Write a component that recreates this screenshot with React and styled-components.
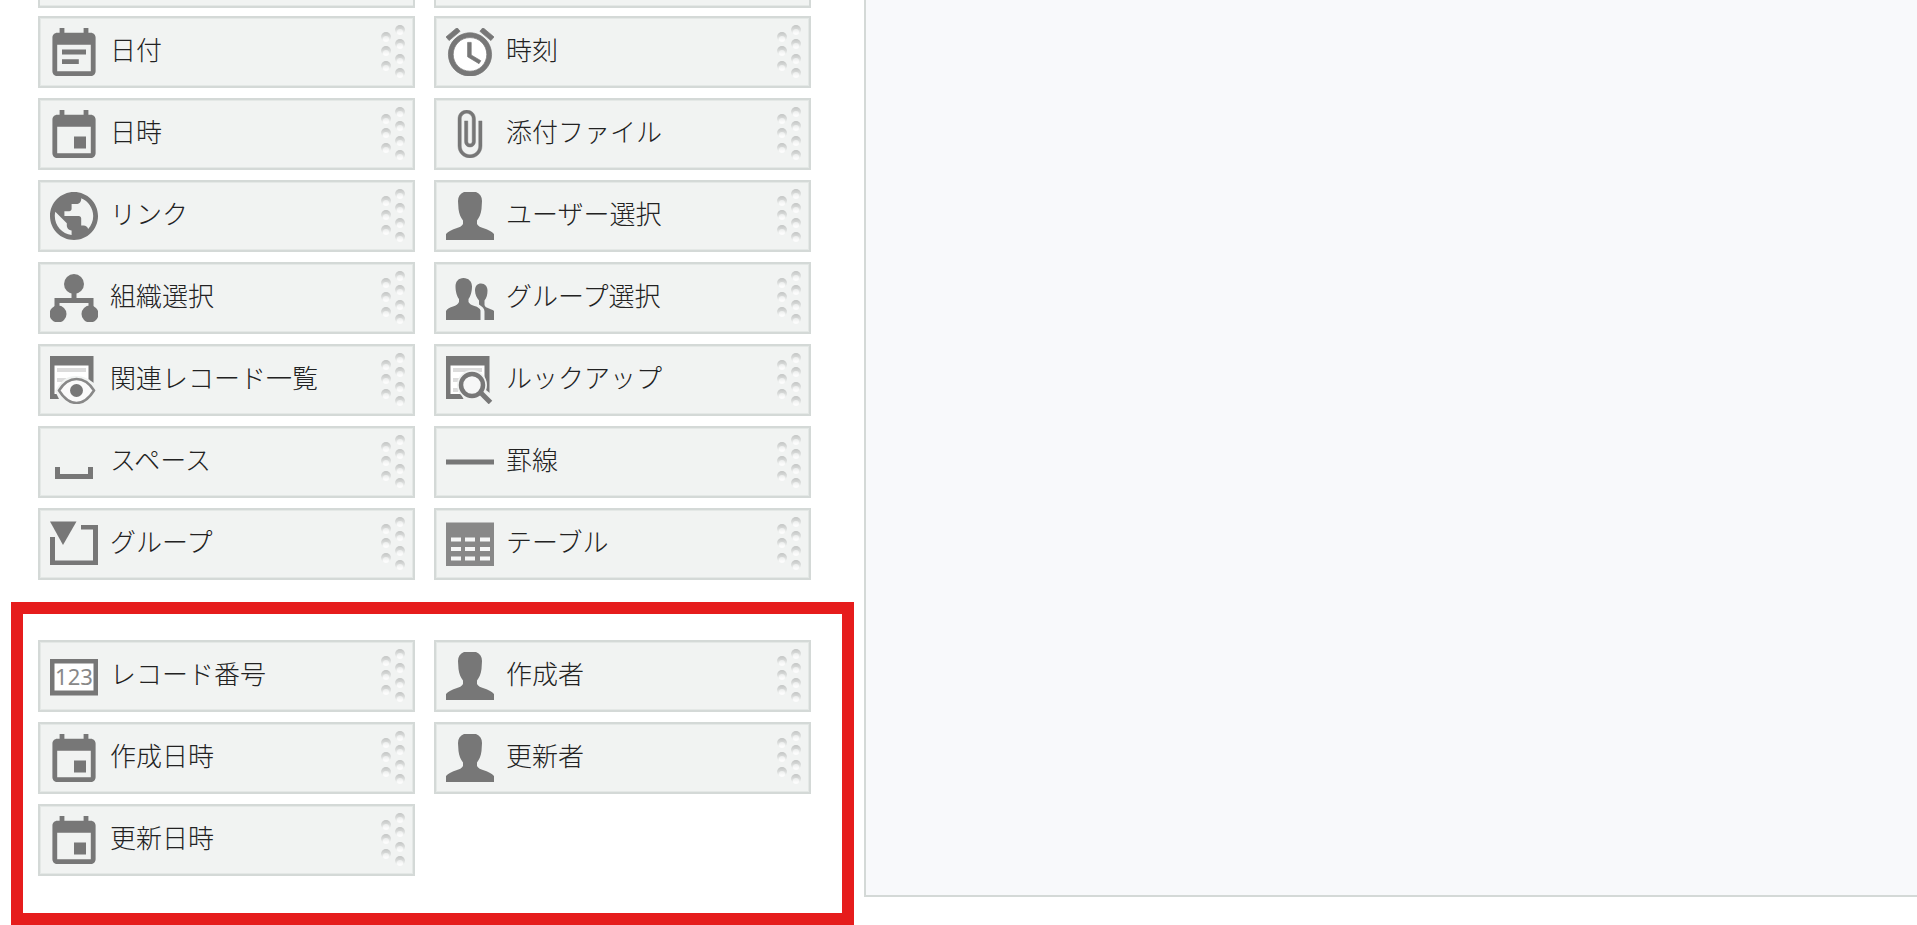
import React from "react";
import styled, { createGlobalStyle } from "styled-components";

const DateIcon = () => (
  <StIcon viewBox="2 1 20 20">
    <path d="M19 3h-1V1h-2v2H8V1H6v2H5c-1.11 0-1.99.9-1.99 2L3 19c0 1.1.89 2 2 2h14c1.1 0 2-.9 2-2V5c0-1.1-.9-2-2-2zm0 16H5V8h14v11z" />
    <path d="M7 10h10v2H7zM7 14h7v2H7z" />
  </StIcon>
);

const DateTimeIcon = () => (
  <StIcon viewBox="2 1 20 20">
    <path d="M17 12h-5v5h5v-5zM16 1v2H8V1H6v2H5c-1.11 0-1.99.9-1.99 2L3 19c0 1.1.89 2 2 2h14c1.1 0 2-.9 2-2V5c0-1.1-.9-2-2-2h-1V1h-2zm3 18H5V8h14v11z" />
  </StIcon>
);

const TimeIcon = () => (
  <StIcon viewBox="2 2 20 20">
    <circle cx="12" cy="13" r="8" fill="#fff" />
    <path
      d="M22 5.72l-4.6-3.86-1.29 1.53 4.6 3.86L22 5.72zM7.88 3.39L6.6 1.86 2 5.71l1.29 1.53 4.59-3.85zM12.5 8H11v6l4.75 2.85.75-1.23-4-2.37V8zM12 4c-4.97 0-9 4.03-9 9s4.02 9 9 9c4.97 0 9-4.03 9-9s-4.03-9-9-9zm0 16c-3.87 0-7-3.13-7-7s3.13-7 7-7 7 3.13 7 7-3.13 7-7 7z"
      stroke="#777"
      strokeWidth="0.3"
    />
  </StIcon>
);

const FileIcon = () => (
  <StIcon viewBox="1.5 1 22 22">
    <path
      d="M16.5 6v11.5c0 2.21-1.79 4-4 4s-4-1.79-4-4V5c0-1.38 1.12-2.5 2.5-2.5s2.5 1.12 2.5 2.5v10.5c0 .55-.45 1-1 1s-1-.45-1-1V6H10v9.5c0 1.38 1.12 2.5 2.5 2.5s2.5-1.12 2.5-2.5V5c0-2.21-1.79-4-4-4S7 2.79 7 5v12.5c0 3.04 2.46 5.5 5.5 5.5s5.5-2.46 5.5-5.5V6h-1.5z"
      stroke="#777"
      strokeWidth="0.2"
    />
  </StIcon>
);

const LinkIcon = () => (
  <StIcon viewBox="2 2 20 20">
    <path d="M12 2C6.48 2 2 6.48 2 12s4.48 10 10 10 10-4.48 10-10S17.52 2 12 2zm-1 17.93c-3.95-.49-7-3.85-7-7.93 0-.62.08-1.21.21-1.79L9 15v1c0 1.1.9 2 2 2v1.93zm6.9-2.54c-.26-.81-1-1.39-1.9-1.39h-1v-3c0-.55-.45-1-1-1H8v-2h2c.55 0 1-.45 1-1V7h2c1.1 0 2-.9 2-2v-.41c2.93 1.19 5 4.06 5 7.41 0 2.08-.8 3.97-2.1 5.39z" />
  </StIcon>
);

const UserIcon = () => (
  <StIcon viewBox="0 0 48 48">
    <path d="M18 0h12c4 1.5 6 4.500 6 9l-.5 8c-.5 5-2.500 9-4.500 11.500V32c1 2 3 3 6 4 5 1.500 9 3.500 11 6v6H0v-6c2-2.500 6-4.500 11-6 3-1 5-2 6-4v-3.500c-2-2.500-4-6.500-4.500-11.500L12 9c0-4.500 2-7.500 6-9z" />
  </StIcon>
);

const OrgIcon = () => (
  <StIcon viewBox="0 0 48 48">
    <circle cx="24" cy="10" r="10" />
    <circle cx="8" cy="40" r="8.5" />
    <circle cx="40" cy="40" r="8.5" />
    <path d="M21.5 18h5v6h17v10h-5v-5h-29v5h-5V24h17z" />
  </StIcon>
);

const GroupUserIcon = () => (
  <StIcon viewBox="0 0 48 48">
    <path d="M17.5 4c5 0 8.500 3.500 8.500 8.500s-1.500 10-3.500 12.500v3c1 2 3 3 6 4 3.500 1 5.500 2.500 6 4.500V46H0v-9c1-2.500 4-3.500 7-4.500s5-2 6-4.500v-3c-2-2.500-3.500-7.500-3.500-12.500S12.500 4 17.500 4z" />
    <path d="M35 9.500c4 0 6.500 3 6.500 7 0 4.500-1 7.500-3 10V31c.5 2 2 2.500 4.500 3.500s4 1.500 5 2.500v9h-9.500v-8.500c0-3-2-4.500-5.500-7v-4c-2-2.500-4-5.500-4-10s2.500-7 6-7z" />
  </StIcon>
);

const RelatedIcon = () => (
  <StIcon viewBox="0 0 48 48">
    <path d="M0 0h43.5v43H0z" />
    <path d="M4.5 9.5h34V38h-34z" fill="#fff" />
    <path d="M7 12h29v4H7zM7 22h9v4H7z" fill="#dcdcdc" />
    <path d="M5 35C12 23 18 20 26 20c8 0 13 3 19 8v17H10z" fill="#f1f3f2" />
    <path
      d="M9 34.5C14 26.5 20 23 26.5 23S39 26.5 44 34.5C39 42.5 33 47 26.5 47S14 42.5 9 34.5z"
      fill="#fafafa"
      stroke="#888"
      strokeWidth="2.5"
    />
    <circle cx="26.5" cy="34.5" r="6.5" />
  </StIcon>
);

const LookupIcon = () => (
  <StIcon viewBox="0 0 48 48">
    <path d="M0 0h43.5v43H0z" />
    <path d="M4.5 9.5h34V38h-34z" fill="#fff" />
    <path d="M7 12h29v4H7zM7 22h7v4H7zM7 32h5v4H7z" fill="#dcdcdc" />
    <path d="M40 34l5 4v6H18l-2-4z" fill="#f1f3f2" />
    <circle cx="26" cy="29" r="12" fill="#fff" stroke="#f1f3f2" strokeWidth="6" />
    <circle cx="26" cy="29" r="11" fill="#f6f7f7" stroke="#777" strokeWidth="4.5" />
    <path d="M34 36l10.5 10.5" fill="none" stroke="#777" strokeWidth="5" />
  </StIcon>
);

const SpaceIcon = () => (
  <StIcon viewBox="0 0 48 48">
    <path d="M5 29h5v7h28v-7h5v12H5z" />
  </StIcon>
);

const LineIcon = () => (
  <StIcon viewBox="0 0 48 48">
    <path d="M0 21.5h48v5H0z" />
  </StIcon>
);

const GroupIcon = () => (
  <StIcon viewBox="0 0 48 48">
    <path d="M0 1.5h26.5L13 25z" />
    <path d="M31 5h17v40H0V17h5v23.5h38V9.5H31z" />
  </StIcon>
);

const TableIcon = () => (
  <StIcon viewBox="0 0 48 48">
    <path d="M0 2.5h48V46H0z" fill="#888" />
    <path
      d="M5 17.5h10v4H5zM19 17.5h10v4H19zM34 17.5h10v4H34zM5 27h10v4H5zM19 27h10v4H19zM34 27h10v4H34zM5 36.5h10v4H5zM19 36.5h10v4H19zM34 36.5h10v4H34z"
      fill="#f6f7f7"
    />
  </StIcon>
);

const NumberIcon = () => (
  <StIcon viewBox="0 0 48 48">
    <path d="M0 7h48v36.5H0z" />
    <path d="M4.5 11.5h39v27h-39z" fill="#fff" />
    <text x="24" y="33" textAnchor="middle" fontFamily="Noto Sans, sans-serif" fontSize="22" fill="#888">
      123
    </text>
  </StIcon>
);

const gripDots = [
  [6, 13],
  [6, 27],
  [6, 42],
  [20, 6],
  [20, 20],
  [20, 35],
  [20, 49],
];

const Grip = () => (
  <StGrip viewBox="0 0 26 56">
    {gripDots.map(([x, y]) => (
      <g key={`${x}-${y}`}>
        <circle cx={x} cy={y} r="5" fill="url(#gripShade)" />
        <circle cx={x} cy={y + 2} r="3" fill="url(#gripLight)" />
      </g>
    ))}
  </StGrip>
);

const fields = [
  { label: "日付", Icon: DateIcon },
  { label: "時刻", Icon: TimeIcon },
  { label: "日時", Icon: DateTimeIcon },
  { label: "添付ファイル", Icon: FileIcon },
  { label: "リンク", Icon: LinkIcon },
  { label: "ユーザー選択", Icon: UserIcon },
  { label: "組織選択", Icon: OrgIcon },
  { label: "グループ選択", Icon: GroupUserIcon },
  { label: "関連レコード一覧", Icon: RelatedIcon },
  { label: "ルックアップ", Icon: LookupIcon },
  { label: "スペース", Icon: SpaceIcon },
  { label: "罫線", Icon: LineIcon },
  { label: "グループ", Icon: GroupIcon },
  { label: "テーブル", Icon: TableIcon },
];

const systemFields = [
  { label: "レコード番号", Icon: NumberIcon },
  { label: "作成者", Icon: UserIcon },
  { label: "作成日時", Icon: DateTimeIcon },
  { label: "更新者", Icon: UserIcon },
  { label: "更新日時", Icon: DateTimeIcon },
];

const FieldList = ({ items }) => (
  <StGrid>
    {items.map(({ label, Icon }) => (
      <StField key={label} type="button">
        <Icon />
        <StLabel>{label}</StLabel>
        <Grip />
      </StField>
    ))}
  </StGrid>
);

const App = () => {
  return (
    <>
      <GlobalStyle />
      {/* shared gradients for the grip dots */}
      <StDefs>
        <defs>
          <linearGradient id="gripShade" x1="0" y1="0" x2="0" y2="1">
            <stop offset="0" stopColor="#c3c5c4" />
            <stop offset="0.4" stopColor="#d6d8d7" />
            <stop offset="0.8" stopColor="#f1f3f2" />
          </linearGradient>
          <linearGradient id="gripLight" x1="0" y1="0" x2="0" y2="1">
            <stop offset="0" stopColor="#ebedec" />
            <stop offset="0.7" stopColor="#fcfcfc" />
          </linearGradient>
        </defs>
      </StDefs>
      <StPage>
        <StPalette>
          <StFields>
            <StPeekRow>
              <StPeek />
              <StPeek />
            </StPeekRow>
            <FieldList items={fields} />
          </StFields>
          <StSystemFields>
            <FieldList items={systemFields} />
          </StSystemFields>
        </StPalette>
        <StCanvas />
      </StPage>
    </>
  );
};

export default App;

const GlobalStyle = createGlobalStyle`
  * {
    box-sizing: border-box;
  }

  body {
    margin: 0;
    background-color: #fff;
    color: #222;
    font-family: "Noto Sans CJK JP", sans-serif;
  }
`;

const StPage = styled.main`
  display: flex;
  overflow: hidden;
`;

const StPalette = styled.div`
  flex: 0 0 864px;
`;

const StFields = styled.section`
  padding: 0 53px 0 38px;
`;

const StSystemFields = styled.section`
  margin: 22px 10px 0 11px;
  padding: 26px 31px 37px 15px;
  border: 12px solid #e61c1c;
`;

const StGrid = styled.div`
  display: grid;
  grid-template-columns: 1fr 1fr;
  gap: 10px 19px;
`;

const StPeekRow = styled(StGrid)`
  margin-bottom: 8px;
`;

const StPeek = styled.div`
  height: 8px;
  border: 2px solid #d4d9d7;
  border-top: none;
  background-color: #f1f3f2;
  box-shadow: inset 0 -1px #e4e8e6;
`;

const StField = styled.button`
  display: flex;
  align-items: center;
  height: 72px;
  padding: 0 7px 0 10px;
  border: 2px solid #d4d9d7;
  background-color: #f1f3f2;
  box-shadow: inset 0 0 0 1px #e4e8e6;
  color: inherit;
  font-family: inherit;
  cursor: move;
`;

const StLabel = styled.span`
  flex: 1;
  padding: 0 0 6px 12px;
  font-size: 26px;
  font-weight: 300;
  line-height: 40px;
  text-align: left;
  white-space: nowrap;
`;

const StIcon = styled.svg`
  flex: none;
  width: 48px;
  height: 48px;
  fill: #777;
`;

const StGrip = styled.svg`
  flex: none;
  width: 26px;
  height: 56px;
`;

const StDefs = styled.svg`
  position: absolute;
  width: 0;
  height: 0;
`;

const StCanvas = styled.section`
  flex: 1;
  margin-bottom: 28px;
  border: solid #d4d9d7;
  border-width: 0 0 2px 2px;
  background-color: #f8f9fb;
`;
